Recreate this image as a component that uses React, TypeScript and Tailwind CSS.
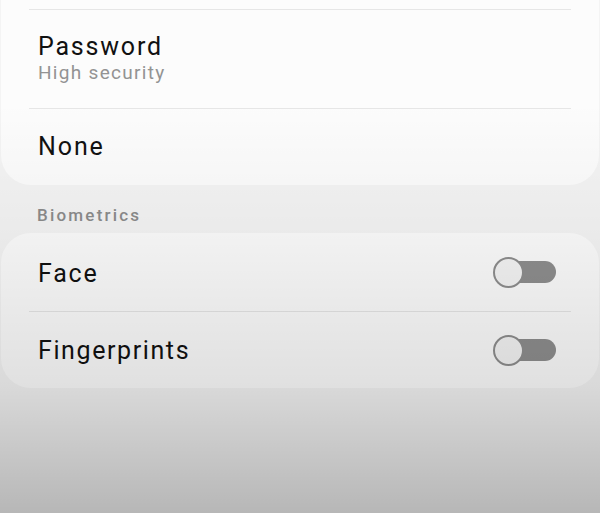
import React from "react";

function Toggle() {
  return (
    <div className="relative w-[64px] h-[32px] flex items-center">
      <div className="absolute left-[2px] right-[1px] h-[22px] rounded-full bg-[#8e8e8e]" />
      <div className="relative w-[31px] h-[31px] rounded-full bg-[#f4f4f4] border-2 border-[#8e8e8e]" />
    </div>
  );
}

function Divider() {
  return <div className="mx-[28px] h-px bg-[#e6e6e6]" />;
}

export default function App() {
  return (
    <div
      className="relative w-full h-[513px] overflow-hidden bg-[#f4f4f4] text-[#111]"
      style={{ fontFamily: "Roboto, 'Noto Sans', sans-serif" }}
    >
      <div className="mx-[1px] bg-[#fcfcfc] rounded-b-[30px] pt-[9px]">
        <Divider />
        <div className="h-[98px] flex flex-col justify-center px-[37px]">
          <div className="text-[25px] leading-[28px] tracking-[1.8px]">Password</div>
          <div className="text-[19px] leading-[24px] tracking-[1.3px] text-[#939393]">High security</div>
        </div>
        <Divider />
        <div className="h-[76px] flex items-center px-[37px]">
          <div className="text-[25px] leading-[28px] tracking-[1.9px]">None</div>
        </div>
      </div>
      <div className="h-[48px] px-[37px] pt-[18px]">
        <div className="text-[17px] leading-[24px] font-medium tracking-[2.2px] text-[#8c8c8c]">Biometrics</div>
      </div>
      <div className="mx-[1px] bg-[#fcfcfc] rounded-[30px]">
        <div className="h-[78px] flex items-center justify-between pl-[37px] pr-[42px]">
          <div className="text-[25px] leading-[28px] tracking-[1.8px] pt-[3px]">Face</div>
          <Toggle />
        </div>
        <Divider />
        <div className="h-[76px] flex items-center justify-between pl-[37px] pr-[42px]">
          <div className="text-[25px] leading-[28px] tracking-[1.6px] pt-[2px]">Fingerprints</div>
          <Toggle />
        </div>
      </div>
      <div
        className="pointer-events-none absolute inset-0"
        style={{
          background:
            "linear-gradient(to bottom, rgba(0,0,0,0) 0%, rgba(0,0,0,0) 20%, rgba(0,0,0,0.04) 45%, rgba(0,0,0,0.11) 75%, rgba(0,0,0,0.25) 100%)",
        }}
      />
    </div>
  );
}
